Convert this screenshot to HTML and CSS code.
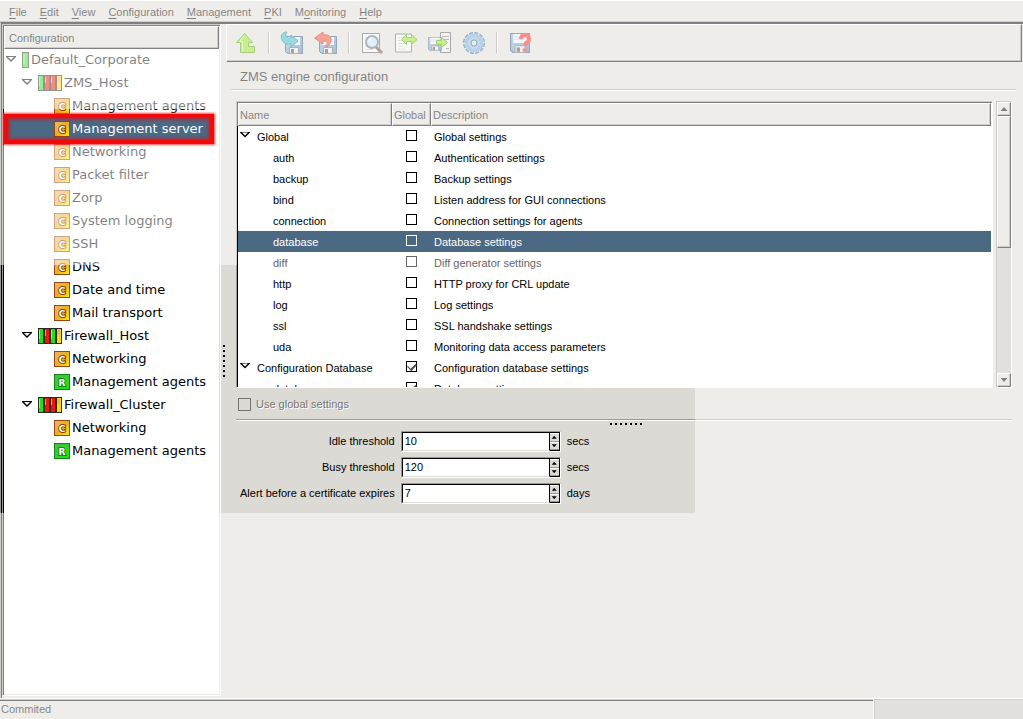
FILE: index.html
```html
<!DOCTYPE html>
<html lang="en">
<head>
<meta charset="utf-8">
<title>ZMS engine configuration</title>
<link rel="stylesheet" href="styles.css">
</head>
<body>
<svg class="defs" width="0" height="0" aria-hidden="true">
  <defs>
    <linearGradient id="gold" x1="0" y1="0" x2="1" y2="1"><stop offset=".1" stop-color="#e4b866"/><stop offset=".5" stop-color="#eab01c"/><stop offset="1" stop-color="#ffee00"/></linearGradient>
    <linearGradient id="leaf" x1="0" y1="0" x2="1" y2="1"><stop offset="0" stop-color="#4fb64f"/><stop offset="1" stop-color="#0fee0a"/></linearGradient>
    <linearGradient id="disk" x1="0" y1="0" x2="1" y2="1"><stop offset="0" stop-color="#8fb4d4"/><stop offset="1" stop-color="#4b7dab"/></linearGradient>
    <symbol id="i-conf" viewBox="0 0 16 16"><rect x=".5" y=".5" width="15" height="15" fill="url(#gold)" stroke="#9a4410"/><text class="glyph" x="8" y="12" text-anchor="middle" fill="#fff" stroke="#8c3c10" stroke-width="2" paint-order="stroke">C</text></symbol>
    <symbol id="i-run" viewBox="0 0 16 16"><rect x=".5" y=".5" width="15" height="15" fill="url(#leaf)" stroke="#128a12"/><text class="glyph" x="8" y="12" text-anchor="middle" fill="#fff" stroke="#128a12" stroke-width="2" paint-order="stroke">R</text></symbol>
    <symbol id="i-site" viewBox="0 0 7 16"><rect x=".5" y=".5" width="6" height="15" fill="#35e01c" stroke="#333"/><path d="M2 2v10" stroke="#8dfc7c"/></symbol>
    <symbol id="i-host" viewBox="0 0 24 16"><path fill="#262a26" d="M0 0h24v16H0z"/><path fill="#28dc18" d="M1 1h4v14H1z"/><path fill="#f31505" d="M7 1h4v14H7zM13 1h4v14h-4z"/><path fill="#fbd800" d="M19 1h4v14h-4z"/><path d="M1.500 2v9" stroke="#8dfc7c"/><path d="M7.500 2v6M13.500 2v6" stroke="#ff8c80"/><path d="M20.500 2v5" stroke="#ddb060" stroke-width="2"/></symbol>
    <symbol id="i-mixed" viewBox="0 0 24 16"><path fill="#262a26" d="M0 0h24v16H0z"/><path fill="#28dc18" d="M1 1h4v14H1zM13 1h4v14h-4z"/><path fill="#f31505" d="M7 1h4v14H7z"/><path fill="#fbd800" d="M19 1h4v14h-4z"/><path d="M1.500 2v9M13.500 2v9" stroke="#8dfc7c"/><path d="M7.500 2v6" stroke="#ff8c80"/><path d="M20.500 2v5" stroke="#ddb060" stroke-width="2"/></symbol>
    <symbol id="i-floppy" viewBox="0 0 18 18"><path d="M.5 .5h17v17h-15l-2-2z" fill="url(#disk)" stroke="#2d4f72"/><path d="M3 1h12v8H3z" fill="#eef2f6"/><path d="M4 3.500h10M4 5.500h10" stroke="#b9c4ce"/><path d="M4.500 11.500h9v6h-9z" fill="#e4e4e0" stroke="#666"/><path d="M6 13h3v4H6z" fill="#444"/></symbol>
    <symbol id="i-page" viewBox="0 0 18 20"><path d="M.5 .5h17v19H.5z" fill="#f2f2f0" stroke="#555"/><path d="M3 4.500h10M3 7.500h7M3 10.500h8M3 13.500h6M3 16.500h8" stroke="#bcbcba"/></symbol>
  </defs>
</svg>

<div class="app">
  <nav class="menubar" aria-label="Main menu">
    <button type="button"><u>F</u>ile</button>
    <button type="button"><u>E</u>dit</button>
    <button type="button"><u>V</u>iew</button>
    <button type="button"><u>C</u>onfiguration</button>
    <button type="button"><u>M</u>anagement</button>
    <button type="button"><u>P</u>KI</button>
    <button type="button">M<u>o</u>nitoring</button>
    <button type="button"><u>H</u>elp</button>
  </nav>

  <div class="workspace">
    <aside class="sidebar">
      <h2 class="sidebar-title">Configuration</h2>
      <ul class="tree">
        <li class="node"><span class="expander"></span><svg width="7" height="16"><use href="#i-site"/></svg>Default_Corporate</li>
        <li class="node depth-1"><span class="expander"></span><svg width="24" height="16"><use href="#i-host"/></svg>ZMS_Host</li>
        <li class="node depth-2"><svg width="16" height="16"><use href="#i-conf"/></svg>Management agents</li>
        <li class="node depth-2 selected"><svg width="16" height="16"><use href="#i-conf"/></svg>Management server<span class="callout"></span></li>
        <li class="node depth-2"><svg width="16" height="16"><use href="#i-conf"/></svg>Networking</li>
        <li class="node depth-2"><svg width="16" height="16"><use href="#i-conf"/></svg>Packet filter</li>
        <li class="node depth-2"><svg width="16" height="16"><use href="#i-conf"/></svg>Zorp</li>
        <li class="node depth-2"><svg width="16" height="16"><use href="#i-conf"/></svg>System logging</li>
        <li class="node depth-2"><svg width="16" height="16"><use href="#i-conf"/></svg>SSH</li>
        <li class="node depth-2"><svg width="16" height="16"><use href="#i-conf"/></svg>DNS</li>
        <li class="node depth-2"><svg width="16" height="16"><use href="#i-conf"/></svg>Date and time</li>
        <li class="node depth-2"><svg width="16" height="16"><use href="#i-conf"/></svg>Mail transport</li>
        <li class="node depth-1"><span class="expander"></span><svg width="24" height="16"><use href="#i-mixed"/></svg>Firewall_Host</li>
        <li class="node depth-2"><svg width="16" height="16"><use href="#i-conf"/></svg>Networking</li>
        <li class="node depth-2"><svg width="16" height="16"><use href="#i-run"/></svg>Management agents</li>
        <li class="node depth-1"><span class="expander"></span><svg width="24" height="16"><use href="#i-host"/></svg>Firewall_Cluster</li>
        <li class="node depth-2"><svg width="16" height="16"><use href="#i-conf"/></svg>Networking</li>
        <li class="node depth-2"><svg width="16" height="16"><use href="#i-run"/></svg>Management agents</li>
      </ul>
    </aside>
    <div class="splitter"><span class="grip grip-v"></span></div>

    <main class="content">
      <div class="toolbar">
        <button type="button" aria-label="Up"><svg width="24" height="24" viewBox="0 0 24 24"><path d="M10.500 2.500l8 9h-4v4h6v6h-14v-10h-4z" fill="#8ee01a" stroke="#4e9a06"/><path d="M10.500 4.500l-5 6h3v10" fill="none" stroke="#c8f57e"/></svg></button>
        <span class="separator"></span>
        <button type="button" aria-label="Load"><svg width="24" height="24" viewBox="0 0 24 24"><use href="#i-floppy" x="5" y="5" width="18" height="18"/><path d="M7 1C2 1 0 5 2 9c1 3 5 5 9 4v3l7-6-7-6v3C7 8 4 5 7 1z" fill="#2cb4c8" stroke="#147888"/></svg></button>
        <button type="button" aria-label="Revert"><svg width="24" height="24" viewBox="0 0 24 24"><use href="#i-floppy" x="5" y="5" width="18" height="18"/><path d="M.5 7L9 1v3c6-1 9 2 8 6-1 4-4 6-6 6 3-4 3-6-2-6v3z" fill="#f5452c" stroke="#b82414"/></svg></button>
        <span class="separator"></span>
        <button type="button" aria-label="View"><svg width="24" height="24" viewBox="0 0 24 24"><use href="#i-page" x="2" y="2" width="18" height="20"/><path d="M16 16l6 6" stroke="#6b432a" stroke-width="3"/><circle cx="12" cy="11" r="6" fill="#c4dcf0" stroke="#5c6c84" stroke-width="2"/><path d="M8.500 10q1-3 4-3" stroke="#fff" fill="none"/></svg></button>
        <button type="button" aria-label="Compare"><svg width="24" height="24" viewBox="0 0 24 24"><use href="#i-page" x="1" y="2" width="17" height="20"/><path d="M7.500 8.500l5-5v3h5v-3l5.500 5-5.500 5v-3h-5v3z" fill="#8ee01a" stroke="#4e9a06"/></svg></button>
        <button type="button" aria-label="Upload"><svg width="24" height="24" viewBox="0 0 24 24"><path d="M12.500 1.500h10v20h-10z" fill="#e8e8e4" stroke="#555"/><path d="M14 5.500h7M14 8.500h7M18 17.500h3" stroke="#777"/><use href="#i-floppy" x="0" y="6" width="14" height="14"/><path d="M8.500 9.500h5v-3l6 5-6 5v-3h-5z" fill="#8ee01a" stroke="#4e9a06"/></svg></button>
        <button type="button" aria-label="Services"><svg width="24" height="24" viewBox="0 0 24 24"><circle cx="12" cy="12" r="9" fill="none" stroke="#2c5680" stroke-width="4" stroke-dasharray="3.500 1.212"/><circle cx="12" cy="12" r="6" fill="none" stroke="#6fa4d3" stroke-width="6"/><circle cx="12" cy="12" r="9" fill="none" stroke="#6fa4d3" stroke-width="2" stroke-dasharray="3.500 1.212"/><circle cx="12" cy="12" r="3" fill="#dcdad5" stroke="#2c5680"/><circle cx="12" cy="12" r="5" fill="none" stroke="#a2c6e6"/></svg></button>
        <span class="separator"></span>
        <button type="button" aria-label="Save query"><svg width="24" height="24" viewBox="0 0 24 24"><use href="#i-floppy" x="2" y="2" width="20" height="20"/><path d="M13 8q0-4 4-4t4 4q0 3-3 4l-1 3M16.500 17.500v3" fill="none" stroke="#f01c1c" stroke-width="4"/></svg></button>
      </div>

      <h1 class="page-title">ZMS engine configuration</h1>

      <div class="panel">
        <div class="list-row">
          <div class="list-frame">
            <table class="settings">
              <colgroup><col class="col-name"><col class="col-global"><col></colgroup>
              <thead><tr><th scope="col">Name</th><th scope="col">Global</th><th scope="col">Description</th></tr></thead>
              <tbody>
                <tr class="group"><td><span class="expander"></span>Global</td><td><input type="checkbox" aria-label="Global"></td><td>Global settings</td></tr>
                <tr><td>auth</td><td><input type="checkbox" aria-label="auth"></td><td>Authentication settings</td></tr>
                <tr><td>backup</td><td><input type="checkbox" aria-label="backup"></td><td>Backup settings</td></tr>
                <tr><td>bind</td><td><input type="checkbox" aria-label="bind"></td><td>Listen address for GUI connections</td></tr>
                <tr><td>connection</td><td><input type="checkbox" aria-label="connection"></td><td>Connection settings for agents</td></tr>
                <tr class="active"><td>database</td><td><input type="checkbox" aria-label="database"></td><td>Database settings</td></tr>
                <tr class="muted"><td>diff</td><td><input type="checkbox" aria-label="diff" disabled></td><td>Diff generator settings</td></tr>
                <tr><td>http</td><td><input type="checkbox" aria-label="http"></td><td>HTTP proxy for CRL update</td></tr>
                <tr><td>log</td><td><input type="checkbox" aria-label="log"></td><td>Log settings</td></tr>
                <tr><td>ssl</td><td><input type="checkbox" aria-label="ssl"></td><td>SSL handshake settings</td></tr>
                <tr><td>uda</td><td><input type="checkbox" aria-label="uda"></td><td>Monitoring data access parameters</td></tr>
                <tr class="group"><td><span class="expander"></span>Configuration Database</td><td><input type="checkbox" aria-label="Configuration Database" checked></td><td>Configuration database settings</td></tr>
                <tr><td>database</td><td><input type="checkbox" aria-label="Configuration database settings" checked></td><td>Database settings</td></tr>
              </tbody>
            </table>
          </div>
          <div class="scrollbar">
            <button type="button" class="step" aria-label="Scroll up"><span class="arrow up"></span></button>
            <span class="thumb"></span>
            <button type="button" class="step last" aria-label="Scroll down"><span class="arrow down"></span></button>
          </div>
        </div>

        <label class="use-global"><input type="checkbox" disabled><span>Use global settings</span></label>
        <div class="divider"><span class="grip grip-h"></span></div>

        <form class="fields">
          <label for="idle">Idle threshold</label>
          <span class="spin"><input id="idle" type="text" value="10"><span class="steps"><button type="button" aria-label="Increase"><span class="arrow up"></span></button><button type="button" aria-label="Decrease"><span class="arrow down"></span></button></span></span>
          <span>secs</span>
          <label for="busy">Busy threshold</label>
          <span class="spin"><input id="busy" type="text" value="120"><span class="steps"><button type="button" aria-label="Increase"><span class="arrow up"></span></button><button type="button" aria-label="Decrease"><span class="arrow down"></span></button></span></span>
          <span>secs</span>
          <label for="alert">Alert before a certificate expires</label>
          <span class="spin"><input id="alert" type="text" value="7"><span class="steps"><button type="button" aria-label="Increase"><span class="arrow up"></span></button><button type="button" aria-label="Decrease"><span class="arrow down"></span></button></span></span>
          <span>days</span>
        </form>
      </div>
    </main>
  </div>

  <footer class="statusbar"><span class="status">Commited</span><span class="progress"></span></footer>
  <div class="veil"></div>
</div>
</body>
</html>
```

FILE: styles.css
```css
* { box-sizing: border-box; }

body {
  margin: 0;
  background: #dcdad5;
  color: #000;
  font: 11px/15px "Liberation Sans", Arial, sans-serif;
}

button, input { font: inherit; color: inherit; margin: 0; }
button { border: 0; padding: 0; background: none; }
.defs { position: absolute; }
.glyph { font: bold 9px "DejaVu Sans", sans-serif; }

.app {
  position: relative;
  display: flex;
  flex-direction: column;
  height: 100vh;
  overflow: hidden;
}

/* menu bar */
.menubar {
  display: flex;
  gap: 13px;
  height: 22px;
  flex: none;
  padding: 2px 9px 0;
  border-top: 1px solid #fff;
  border-bottom: 1px solid #9c9a94;
}
.menubar u { text-underline-offset: 2px; }

/* main area */
.workspace {
  display: flex;
  flex: 1;
  min-height: 0;
  border-top: 1px solid #000;
  border-left: 1px solid #9c9a94;
  box-shadow: inset 1px 1px #000;
  padding: 1px 0 0 1px;
}
.sidebar {
  display: flex;
  flex-direction: column;
  flex: none;
  width: 219px;
  margin-bottom: 2px;
  background: #fff;
  border: 1px solid #9c9a94;
  border-right-color: #fff;
  border-bottom-color: #fff;
  box-shadow: inset 1px 1px #000, inset -1px -1px #dcdad5;
  padding: 1px;
}
.sidebar-title {
  flex: none;
  margin: 0;
  padding: 4px 4px 0;
  height: 23px;
  font: inherit;
  background: #dcdad5;
  border: 1px solid #000;
  border-top-color: #fff;
  border-left-color: #fff;
  box-shadow: inset -1px -1px #9c9a94;
}
.tree {
  list-style: none;
  margin: -1px 0 0;
  padding: 0;
  font: 13px/23px "DejaVu Sans", Verdana, sans-serif;
}
.node {
  position: relative;
  display: flex;
  align-items: center;
  gap: 2px;
  height: 23px;
  padding-left: 2px;
  white-space: nowrap;
}
.node svg { flex: none; }
.depth-1 { padding-left: 18px; }
.depth-2 { padding-left: 50px; }
.selected { background: #4b6983; color: #fff; margin-right: 5px; }
.callout {
  position: absolute;
  z-index: 3;
  inset: -3px 0 -4px 0;
  border: 4px solid #f20a0a;
  box-shadow: 0 0 2px 1px #f44, inset 0 0 3px 2px #c0202ccc;
}

.expander {
  display: inline-block;
  flex: none;
  width: 12px;
  height: 7px;
  margin-right: 2px;
  background: #000;
  clip-path: polygon(evenodd, 0 0, 10px 0, 10px 1px, 5px 6px, 0 1px, 0 0, 2px 1px, 8px 1px, 5px 4px, 2px 1px);
}

.splitter { display: flex; align-items: center; width: 5px; flex: none; padding-left: 2px; }
.grip-v {
  width: 2px;
  height: 33px;
  background: repeating-linear-gradient(#000 0 2px, transparent 2px 5px);
}

.content { flex: 1; min-width: 0; }
.toolbar {
  display: flex;
  align-items: center;
  gap: 10px;
  height: 38px;
  margin-right: 1px;
  padding: 0 7px;
  border: 1px solid #fff;
  border-right-color: #000;
  border-bottom-color: #000;
  box-shadow: inset -1px -1px #9c9a94;
}
.toolbar svg { display: block; }
.separator { width: 2px; height: 22px; background: linear-gradient(90deg, #9c9a94 50%, #fff 50%); }

.page-title {
  margin: 0 7px 0 5px;
  padding: 7px 9px 5px;
  font: 13px/15px "Liberation Sans", Arial, sans-serif;
  border-bottom: 1px solid #9c9a94;
  box-shadow: 0 1px #fff;
}

.panel { padding: 11px 11px 0 10px; }
.list-row { display: flex; gap: 3px; height: 287px; }
.list-frame {
  flex: 1;
  overflow: hidden;
  background: #fff;
  border: 1px solid #9c9a94;
  border-right-color: #fff;
  border-bottom-color: #fff;
  box-shadow: inset 1px 1px #000;
  padding: 1px 1px 0 1px;
}
.settings { width: 100%; table-layout: fixed; border-collapse: separate; border-spacing: 0; }
.col-name { width: 154px; }
.col-global { width: 39px; }
.settings th {
  height: 23px;
  padding: 2px 1px 0;
  font-weight: normal;
  text-align: left;
  background: #dcdad5;
  border: 1px solid #000;
  border-top-color: #fff;
  border-left-color: #fff;
  box-shadow: inset -1px -1px #9c9a94;
}
.settings td { height: 21px; padding: 1px 0 0 3px; white-space: nowrap; }
.settings td:first-child { padding-left: 35px; }
.settings .group td:first-child { padding-left: 2px; }
.settings .group .expander { margin-right: 5px; vertical-align: 2px; }
.settings td:nth-child(2) { padding: 0 0 3px; text-align: center; }
.settings input {
  appearance: none;
  display: inline-grid;
  place-items: center;
  width: 11px;
  height: 11px;
  border: 1px solid #000;
  vertical-align: middle;
}
.settings input:checked::before {
  content: "";
  width: 7px;
  height: 4px;
  border: solid #444;
  border-width: 0 0 2px 1px;
  transform: rotate(-45deg);
  margin-bottom: 2px;
}
.active { background: #4b6983; color: #fff; }
.settings .active input { border-color: #fff; }
.muted { color: #666; }
.settings .muted input { border-color: #666; }

.arrow { width: 7px; height: 4px; background: #000; }
.up { clip-path: polygon(50% 0, 100% 100%, 0 100%); }
.down { clip-path: polygon(0 0, 100% 0, 50% 100%); }

.scrollbar {
  display: flex;
  flex-direction: column;
  width: 16px;
  background: #c2c0ba;
  border: 1px solid #9c9a94;
  border-right-color: #fff;
  border-bottom-color: #fff;
}
.step, .thumb {
  display: grid;
  place-items: center;
  height: 14px;
  background: #dcdad5;
  border: 1px solid #000;
  border-top-color: #fff;
  border-left-color: #fff;
  box-shadow: inset -1px -1px #9c9a94;
}
.thumb { height: 132px; }
.last { margin-top: auto; }

.use-global {
  display: flex;
  align-items: center;
  gap: 5px;
  width: max-content;
  height: 31px;
  padding: 1px 0 0 2px;
  color: #757470;
  text-shadow: 1px 1px #fff;
}
.use-global input { appearance: none; width: 13px; height: 13px; border: 1px solid #757470; }
.divider {
  display: flex;
  justify-content: center;
  height: 6px;
  border-top: 1px solid #9c9a94;
  box-shadow: inset 0 1px #fff;
  padding: 3px 0 0 5px;
}
.grip-h {
  width: 33px;
  height: 2px;
  background: repeating-linear-gradient(90deg, #000 0 2px, transparent 2px 5px);
}

.fields {
  display: grid;
  grid-template-columns: max-content 160px max-content;
  gap: 5px 6px;
  align-items: center;
  padding: 6px 4px;
}
.fields label { text-align: right; }
.spin {
  display: flex;
  height: 21px;
  background: #fff;
  border: 1px solid #9c9a94;
  border-right-color: #fff;
  border-bottom-color: #fff;
}
.spin input {
  flex: 1;
  min-width: 0;
  padding: 0 2px;
  background: none;
  border: 1px solid #000;
  border-bottom-color: #dcdad5;
  outline: 0;
}
.steps { display: flex; flex-direction: column; width: 10px; border: 1px solid #000; border-left: 0; }
.steps button {
  display: grid;
  place-items: center;
  flex: 1;
  background: #dcdad5;
  box-shadow: inset 0 1px #fff, inset 0 -1px #9c9a94;
}
.steps .arrow { width: 5px; height: 3px; }

/* status bar */
.statusbar { display: flex; flex: none; height: 21px; border-top: 1px solid #fff; }
.status {
  flex: 1;
  padding: 2px 1px;
  border-top: 1px solid #9c9a94;
  border-right: 1px solid #fff;
  box-shadow: inset 0 1px #000;
}
.progress { width: 149px; background: #c4c2bc; border: 1px solid #9c9a94; border-width: 1px 0 0 1px; }

/* translucent veil with openings over the areas in focus */
.veil {
  position: absolute;
  z-index: 2;
  inset: 0;
  pointer-events: none;
  background: rgba(255, 255, 255, .5);
  clip-path: polygon(evenodd, 0 0, 100% 0, 100% 100%, 0 100%, 0 0,
    3px 109px, 213px 109px, 213px 145px, 3px 145px, 3px 109px, 0 0,
    0 265px, 237px 265px, 237px 126px, 991px 126px, 991px 386px, 695px 386px, 695px 513px, 0 513px, 0 265px, 0 0);
}
```
